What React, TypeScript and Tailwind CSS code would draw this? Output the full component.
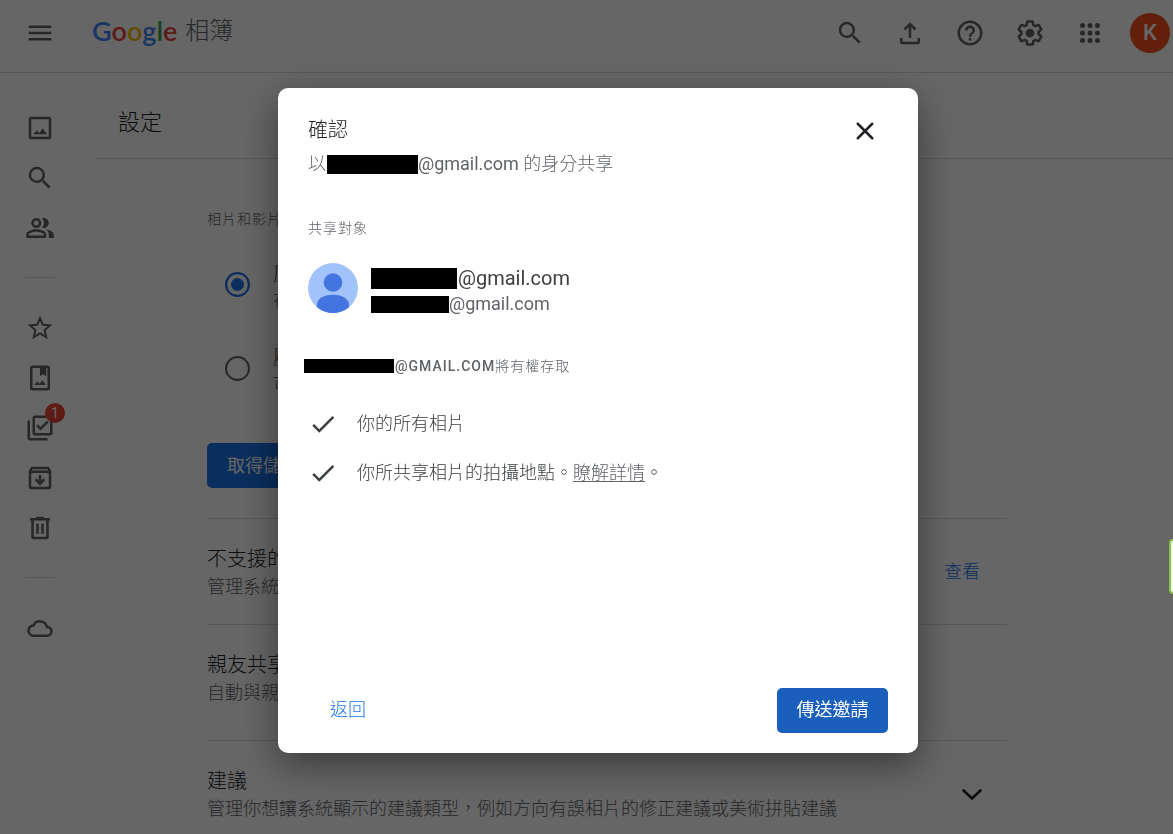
import React from "react";
import {
  MdCheck,
  MdHelpOutline,
  MdMenu,
  MdOutlineLibraryAddCheck,
  MdOutlinePeopleAlt,
  MdSearch,
  MdStarBorder,
} from "react-icons/md";

type IconProps = { children: React.ReactNode };

// filled shapes on a 24 unit grid
const FillIcon: React.FC<IconProps> = ({ children }) => (
  <svg viewBox="0 0 24 24" className="size-[30px]" fill="currentColor" aria-hidden="true">
    {children}
  </svg>
);

// stroked shapes on the same grid
const LineIcon: React.FC<IconProps> = ({ children }) => (
  <svg
    viewBox="0 0 24 24"
    className="size-[30px]"
    fill="none"
    stroke="currentColor"
    strokeWidth="2"
    aria-hidden="true"
  >
    {children}
  </svg>
);

const UploadIcon = () => (
  <LineIcon>
    <path d="M12 16V5M7.6 9.2 12 4.8l4.4 4.4M5 16v3q0 1 1 1h12q1 0 1-1v-3" />
  </LineIcon>
);

const SettingsIcon = () => (
  <FillIcon>
    <path d="M13.85 22.25h-3.7c-.74 0-1.36-.54-1.45-1.27l-.27-1.89c-.27-.14-.53-.29-.79-.46l-1.8.72c-.7.26-1.47-.03-1.81-.65L2.2 15.53c-.35-.66-.2-1.44.36-1.88l1.53-1.19c-.01-.15-.02-.3-.02-.46 0-.15.01-.31.02-.46l-1.52-1.19c-.59-.45-.74-1.26-.37-1.88l1.85-3.19c.34-.62 1.11-.9 1.79-.63l1.81.73c.26-.17.52-.32.78-.46l.27-1.91c.09-.7.71-1.25 1.44-1.25h3.7c.74 0 1.36.54 1.45 1.27l.27 1.89c.27.14.53.29.79.46l1.8-.72c.71-.26 1.48.03 1.82.65l1.84 3.18c.36.66.2 1.44-.36 1.88l-1.52 1.19c.01.15.02.3.02.46s-.01.31-.02.46l1.52 1.19c.56.45.72 1.23.37 1.86l-1.86 3.22c-.34.62-1.11.9-1.8.63l-1.8-.72c-.26.17-.52.32-.78.46l-.27 1.91c-.1.68-.72 1.22-1.46 1.22zm-3.23-2h2.76l.37-2.55.53-.22c.44-.18.88-.44 1.34-.78l.45-.34 2.38.96 1.38-2.4-2.03-1.58.07-.56c.03-.26.06-.51.06-.78s-.03-.53-.06-.78l-.07-.56 2.03-1.58-1.39-2.4-2.39.96-.45-.35c-.42-.32-.87-.58-1.33-.77l-.52-.22-.37-2.55h-2.76l-.37 2.55-.53.21c-.44.19-.88.44-1.34.79l-.45.33-2.38-.95-1.39 2.39 2.03 1.58-.07.56a7 7 0 0 0-.06.79c0 .26.02.53.06.78l.07.56-2.03 1.58 1.38 2.4 2.39-.96.45.35c.43.33.86.58 1.33.77l.53.22.38 2.55z" />
    <circle cx="12" cy="12" r="3.5" />
  </FillIcon>
);

const AppsIcon = () => (
  <FillIcon>
    {[6, 12, 18].map((y) => [6, 12, 18].map((x) => <circle key={`${x}-${y}`} cx={x} cy={y} r="2" />))}
  </FillIcon>
);

const PhotosIcon = () => (
  <LineIcon>
    <rect x="4" y="4" width="16" height="16" rx="1" />
    <path d="M6.5 17h11.2l-3.6-4.6-2.8 3.6-1.9-2.3z" fill="currentColor" stroke="none" />
  </LineIcon>
);

const AlbumIcon = () => (
  <LineIcon>
    <rect x="5" y="3" width="14" height="18" rx="1" />
    <path
      d="M12 3h5v7.5l-2.5-1.5-2.5 1.500zM7.300 17.500h9.400l-2.800-3.800-2.200 2.800-1.700-2z"
      fill="currentColor"
      stroke="none"
    />
  </LineIcon>
);

const ArchiveIcon = () => (
  <LineIcon>
    <path d="M4 6.5 5.500 4h13L20 6.500V19q0 1-1 1H5q-1 0-1-1zM4 7h16" />
    <path d="M12 9.500v6.500M8.500 13l3.500 3.500 3.500-3.500" />
  </LineIcon>
);

const TrashIcon = () => (
  <LineIcon>
    <path d="M4 5h16M9 4h6M6 5v14q0 1 1 1h10q1 0 1-1V5M10 8.500v8M14 8.500v8" />
  </LineIcon>
);

const CloudIcon = () => (
  <LineIcon>
    <path d="M7 18.200a4 4 0 0 1-.3-8.200A5.800 5.800 0 0 1 17.600 11.200a3.500 3.500 0 0 1 .2 7z" />
  </LineIcon>
);

const Redacted: React.FC<{ size: string }> = ({ size }) => (
  <span className={`inline-block shrink-0 bg-black ${size}`} />
);

const Header = () => (
  <header className="flex h-[73px] shrink-0 items-center border-b border-[#dadce0] pr-[3px] pb-[7px] pl-[25px] text-[#5f6368]">
    <button aria-label="主選單">
      <MdMenu className="size-[30px]" />
    </button>
    <a href="#home" className="mb-[3px] ml-[37px] flex items-center gap-2">
      <span className="font-[Lato,sans-serif] text-[27px] leading-8 font-semibold">
        <span className="text-[#4285f4]">G</span>
        <span className="text-[#ea4335]">o</span>
        <span className="text-[#fbbc05]">o</span>
        <span className="text-[#4285f4]">g</span>
        <span className="text-[#34a853]">l</span>
        <span className="text-[#ea4335]">e</span>
      </span>
      <span className="text-[24px] leading-8">相簿</span>
    </a>
    <div className="ml-auto flex items-center gap-[30px]">
      <button aria-label="搜尋">
        <MdSearch className="size-[30px]" />
      </button>
      <button aria-label="上傳">
        <UploadIcon />
      </button>
      <button aria-label="說明">
        <MdHelpOutline className="size-[30px]" />
      </button>
      <button aria-label="設定">
        <SettingsIcon />
      </button>
      <button aria-label="應用程式">
        <AppsIcon />
      </button>
    </div>
    <button className="ml-[25px] size-10 rounded-full bg-[#f4511e] text-[22px] leading-10 font-medium text-white">
      K
    </button>
  </header>
);

const Sidebar = () => (
  <nav className="flex w-[95px] shrink-0 flex-col gap-5 pt-10 pl-[25px] text-[#5f6368]">
    <a href="#photos" aria-label="相片" className="w-[30px]">
      <PhotosIcon />
    </a>
    <a href="#search" aria-label="搜尋" className="w-[30px]">
      <MdSearch className="size-[30px]" />
    </a>
    <a href="#sharing" aria-label="共享" className="w-[30px]">
      <MdOutlinePeopleAlt className="size-[30px]" />
    </a>
    <div className="flex h-[30px] w-[30px] items-center pb-0.5">
      <hr className="w-full border-[#dadce0]" />
    </div>
    <a href="#favorites" aria-label="最愛" className="w-[30px]">
      <MdStarBorder className="size-[30px]" />
    </a>
    <a href="#albums" aria-label="相簿" className="w-[30px]">
      <AlbumIcon />
    </a>
    <a href="#utilities" aria-label="公用程式" className="relative w-[30px]">
      <MdOutlineLibraryAddCheck className="size-[30px]" />
      <span className="absolute -top-[10px] left-5 size-5 rounded-full bg-[#ea4335] text-center text-[14px] leading-5 font-normal text-white">
        1
      </span>
    </a>
    <a href="#archive" aria-label="封存" className="w-[30px]">
      <ArchiveIcon />
    </a>
    <a href="#trash" aria-label="垃圾桶" className="w-[30px]">
      <TrashIcon />
    </a>
    <div className="flex h-[30px] w-[30px] items-center pb-0.5">
      <hr className="w-full border-[#dadce0]" />
    </div>
    <a href="#storage" aria-label="儲存空間" className="w-[30px]">
      <CloudIcon />
    </a>
  </nav>
);

const QualityOption: React.FC<{ id: string; title: string; text: string; checked?: boolean }> = ({
  id,
  title,
  text,
  checked,
}) => (
  <div className="flex items-start gap-[23px] pl-[18px]">
    <input
      type="radio"
      id={id}
      name="quality"
      defaultChecked={checked}
      className="mt-3 size-[25px] appearance-none rounded-full border-2 border-[#5f6368] checked:border-[#1a73e8] checked:bg-[#1a73e8] checked:shadow-[inset_0_0_0_4px_white]"
    />
    <label htmlFor={id}>
      <span className="block text-[20px] leading-7 text-[#3c4043]">{title}</span>
      <span className="block text-[18px] leading-[26px] text-[#5f6368]">{text}</span>
    </label>
  </div>
);

const SettingRow: React.FC<{ title: string; text: string; size: string; children?: React.ReactNode }> = ({
  title,
  text,
  size,
  children,
}) => (
  <div className={`flex justify-between border-t border-[#dadce0] pt-[26px] ${size}`}>
    <div>
      <h2 className="text-[20px] leading-7 text-[#202124]">{title}</h2>
      <p className="text-[18px] leading-7 text-[#5f6368]">{text}</p>
    </div>
    {children}
  </div>
);

const Settings = () => (
  <main className="min-w-0 flex-1">
    <h1 className="h-[86px] border-b border-[#dadce0] pt-8 pl-[23px] text-[22px] leading-9 text-[#202124]">
      設定
    </h1>
    <div className="ml-28 max-w-[800px] pt-[50px]">
      <h2 className="text-[14px] leading-5 tracking-[1px] text-[#5f6368]">相片和影片</h2>
      <div className="mt-[31px] flex flex-col gap-[30px]">
        <QualityOption id="original" title="原始畫質" text="在原畫質" checked />
        <QualityOption id="saver" title="壓縮畫質" text="可節省" />
      </div>
      <button className="mt-[45px] mb-[30px] block h-[45px] rounded-[5px] bg-[#1a73e8] px-5 text-[18px] leading-7 font-normal text-white">
        取得儲存空間
      </button>
      <SettingRow title="不支援的影片" text="管理系統" size="h-[106px]">
        <a href="#unsupported" className="mr-[27px] self-start pt-[13px] text-[18px] leading-7 text-[#1a73e8]">
          查看
        </a>
      </SettingRow>
      <SettingRow title="親友共享" text="自動與親友" size="h-[116px]" />
      <SettingRow
        title="建議"
        text="管理你想讓系統顯示的建議類型，例如方向有誤相片的修正建議或美術拼貼建議"
        size="h-[116px]"
      >
        <button aria-label="展開" className="mr-5 h-[54px] text-[#202124]">
          <LineIcon>
            <path d="m4.600 8.600 7.400 7 7.400-7" />
          </LineIcon>
        </button>
      </SettingRow>
    </div>
  </main>
);

const ConfirmDialog = () => (
  <div
    role="dialog"
    aria-modal="true"
    aria-labelledby="dialog-title"
    className="flex min-h-[665px] w-[640px] flex-col rounded-[10px] bg-white px-[30px] pt-7 pb-5 shadow-[0_12px_38px_rgba(0,0,0,0.45)]"
  >
    <div className="flex items-start justify-between">
      <div>
        <h2 id="dialog-title" className="text-[20px] leading-7 text-[#202124]">
          確認
        </h2>
        <p className="mt-1 flex items-center text-[18px] leading-8 text-[#5f6368]">
          以
          <Redacted size="ml-px h-[19px] w-[91px]" />
          <span>
            <span className="font-normal">@gmail.com</span> 的身分共享
          </span>
        </p>
      </div>
      <button aria-label="關閉" className="mr-2 text-[#202124]">
        <LineIcon>
          <path d="m6.200 6.200 11.600 11.600M17.800 6.200 6.200 17.800" strokeLinecap="round" />
        </LineIcon>
      </button>
    </div>

    <h3 className="mt-[38px] text-[14px] leading-5 tracking-[1px] text-[#5f6368]">共享對象</h3>
    <div className="mt-[25px] flex items-start gap-[13px]">
      <svg viewBox="0 0 50 50" className="size-[50px]" aria-hidden="true">
        <circle cx="25" cy="25" r="25" fill="#a1c2fa" />
        <circle cx="25" cy="19.500" r="9.300" fill="#4374e0" />
        <path d="M9 44.200V42c0-7 8-10.200 16-10.200S41 35 41 42v2.200A25 25 0 0 1 9 44.200z" fill="#4374e0" />
      </svg>
      <div className="font-normal">
        <p className="flex items-center text-[20px] leading-[30px] text-[#3c4043]">
          <Redacted size="mr-px h-[21px] w-[86px]" />
          @gmail.com
        </p>
        <p className="flex items-center text-[18px] leading-[22px] text-[#5f6368]">
          <Redacted size="h-[17px] w-[78px]" />
          @gmail.com
        </p>
      </div>
    </div>

    <h3 className="mt-[41px] -ml-1 flex items-center text-[14px] leading-5 font-medium tracking-[1px] text-[#5f6368]">
      <Redacted size="mr-px h-[14px] w-[90px]" />
      <span>
        @GMAIL.COM<span className="font-light">將有權存取</span>
      </span>
    </h3>
    <ul className="mt-[33px] flex flex-col gap-[19px] text-[18px] leading-[30px] text-[#3c4043]">
      <li className="flex gap-[19px]">
        <MdCheck className="size-[30px] shrink-0" />
        你的所有相片
      </li>
      <li className="flex gap-[19px]">
        <MdCheck className="size-[30px] shrink-0" />
        <p>
          你所共享相片的拍攝地點。
          <a href="#learn-more" className="text-[#5f6368] underline underline-offset-2">
            瞭解詳情
          </a>
          。
        </p>
      </li>
    </ul>

    <div className="mt-auto flex items-center justify-between text-[18px] leading-7">
      <button className="h-[45px] px-[22px] pb-0.5 text-[#1a73e8]">返回</button>
      <button className="h-[45px] w-[111px] rounded-[5px] bg-[#1b5fbc] pb-0.5 font-normal text-white">
        傳送邀請
      </button>
    </div>
  </div>
);

const App: React.FC<{}> = () => {
  return (
    <div
      lang="zh-Hant"
      className="relative flex h-screen flex-col overflow-hidden bg-white font-[Roboto,'Noto_Sans_CJK_TC',sans-serif] font-light"
    >
      <Header />
      <div className="flex min-h-0 flex-1">
        <Sidebar />
        <Settings />
      </div>
      <div className="fixed inset-0 flex items-start justify-center overflow-hidden bg-black/60 pt-[88px] pl-[23px]">
        <ConfirmDialog />
      </div>
      <div className="fixed top-[539px] right-0 h-[55px] w-1 rounded-l-[4px] border-y-2 border-l-2 border-[#8bc34a] bg-[#f1fbe6]" />
    </div>
  );
};

export default App;
